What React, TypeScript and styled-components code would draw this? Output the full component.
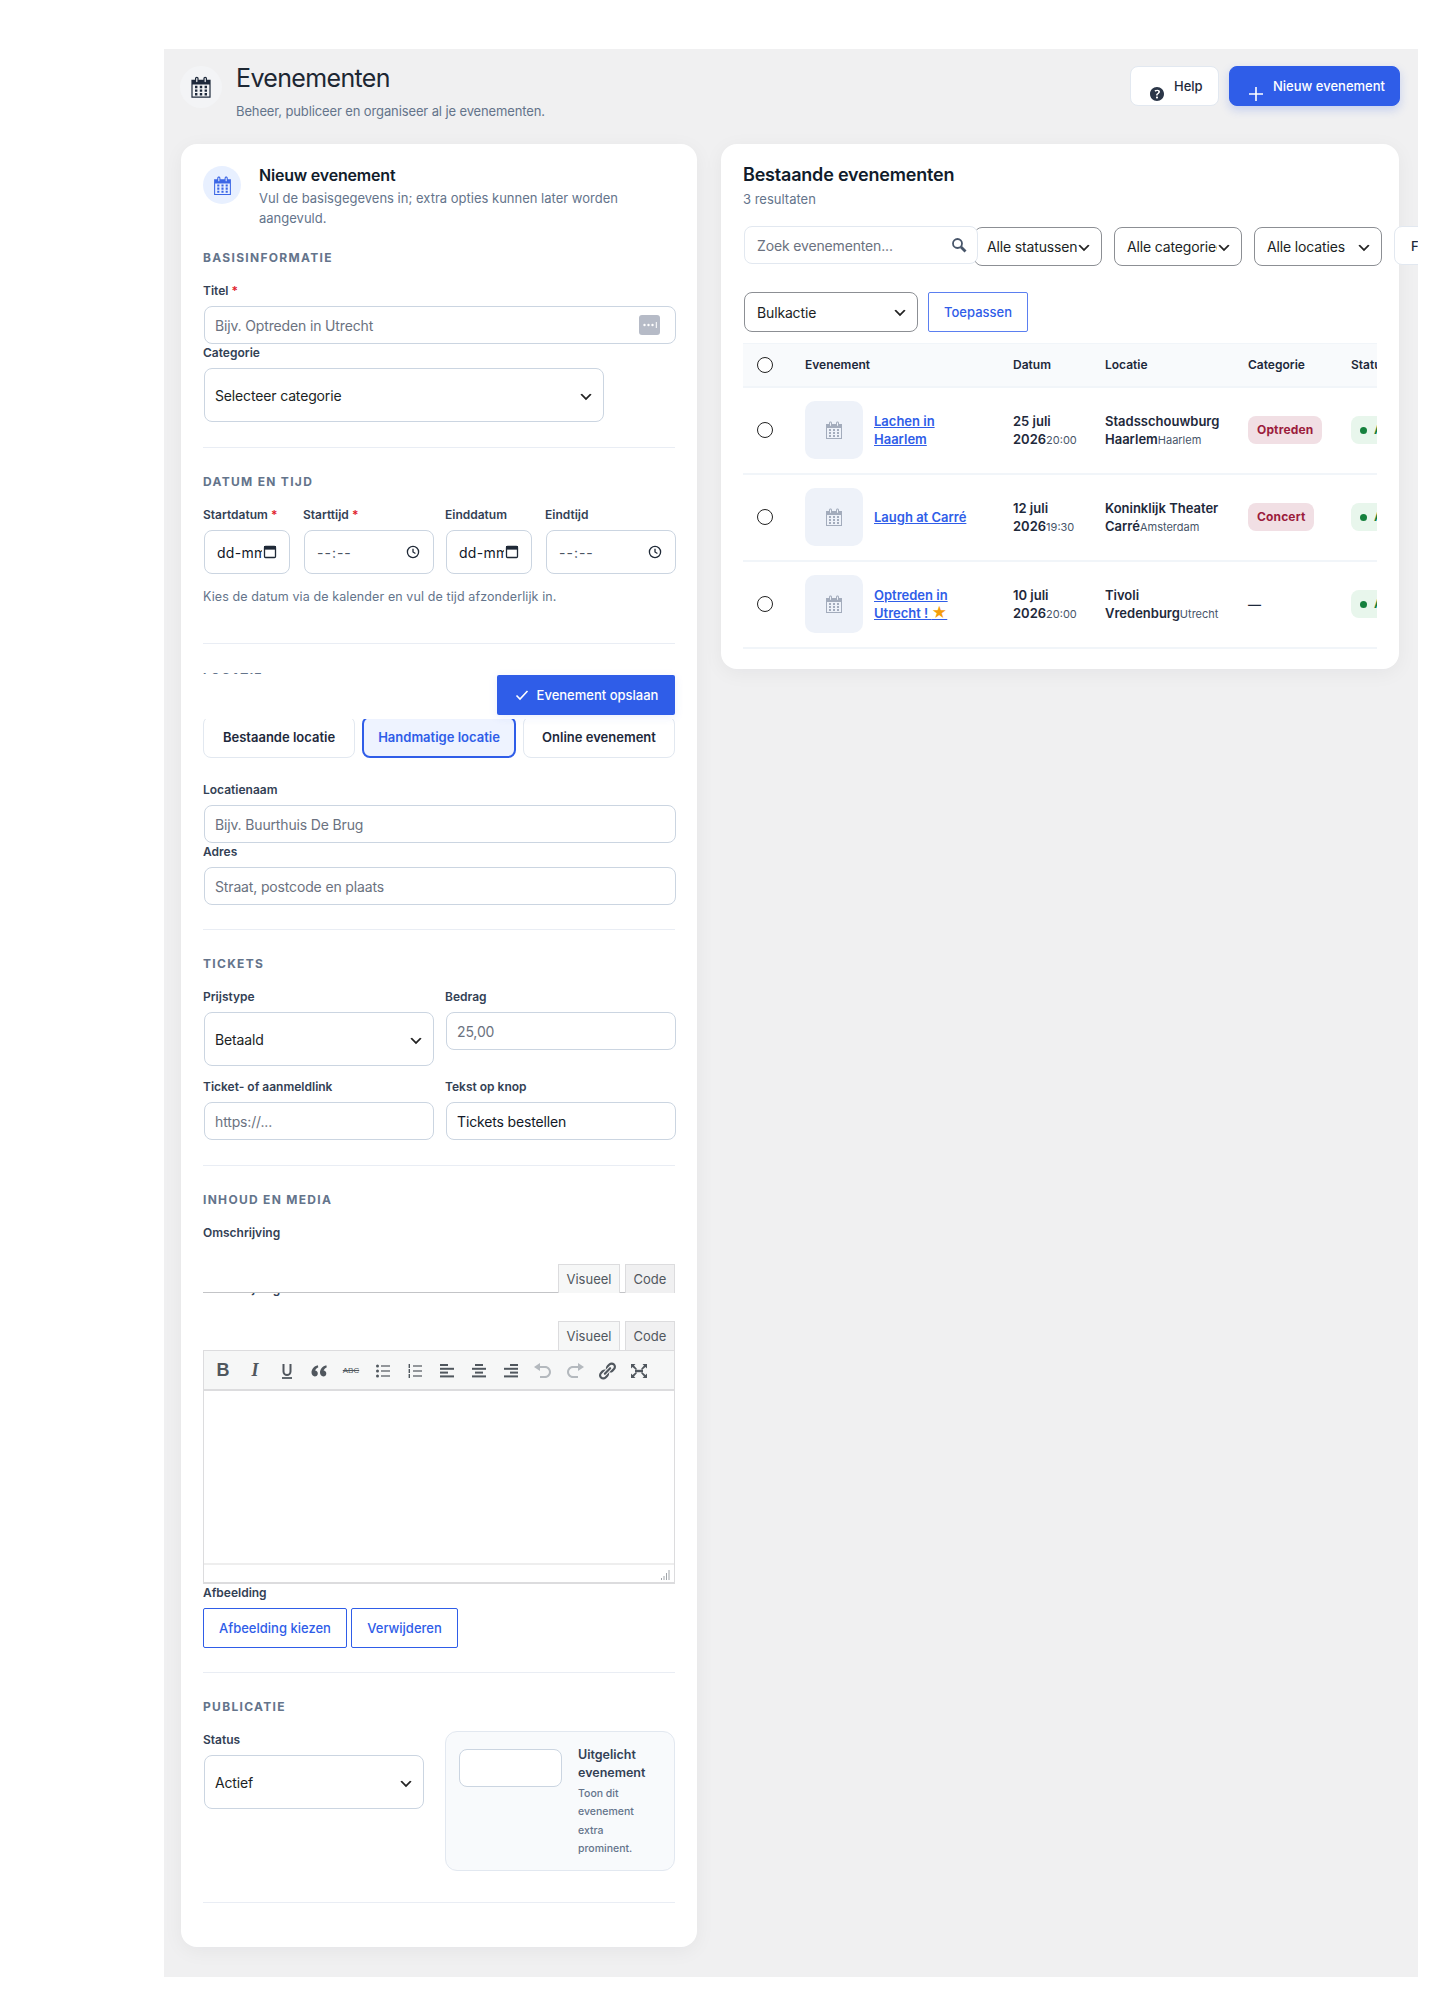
import React from "react";
import styled, { createGlobalStyle } from "styled-components";

const blue = "#2f5de8";
const slate = "#64748b";
const ink = "#1e293b";
const line = "#cbd5e1";

const GlobalStyle = createGlobalStyle`
  html, body { margin: 0; padding: 0; background: #fff; }
  body { font-family: Inter, "Liberation Sans", sans-serif; color: ${ink}; }
  * { box-sizing: border-box; }
`;

const Page = styled.div`
  padding: 49px 22px 37px 164px;
`;
const Main = styled.main`
  height: 1928px;
  background: #f0f0f1;
  padding: 17px 19px 30px 17px;
  overflow: hidden;
`;
const Header = styled.header`
  display: flex;
  justify-content: space-between;
  align-items: flex-start;
  height: 78px;
  margin: 0 -1px;
`;
const HeaderLeft = styled.div`
  display: flex;
  gap: 14px;
`;
const RoundIcon = styled.div<{ $size: number; $bg: string; $color: string }>`
  flex: none;
  width: ${(p) => p.$size}px;
  height: ${(p) => p.$size}px;
  border-radius: 50%;
  background: ${(p) => p.$bg};
  color: ${(p) => p.$color};
  display: flex;
  align-items: center;
  justify-content: center;
`;
const PageTitle = styled.h1`
  margin: 0;
  font-size: 25px;
  line-height: 24px;
  font-weight: 400;
  letter-spacing: -0.65px;
  color: #1d2733;
`;
const PageSub = styled.p`
  margin: 12px 0 0;
  font-size: 13px;
  line-height: 18px;
  letter-spacing: -0.12px;
  color: ${slate};
`;
const HeaderActions = styled.div`
  display: flex;
  gap: 10px;
`;
const HeaderButton = styled.button<{ $primary?: boolean; $w: number }>`
  width: ${(p) => p.$w}px;
  height: 40px;
  padding: 0 0 0 16px;
  display: flex;
  align-items: center;
  gap: 7px;
  border-radius: 8px;
  font: 500 13px Inter, sans-serif;
  border: 1px solid ${(p) => (p.$primary ? blue : "#e2e8f0")};
  background: ${(p) => (p.$primary ? blue : "#fff")};
  color: ${(p) => (p.$primary ? "#fff" : ink)};
  box-shadow: ${(p) => (p.$primary ? "0 4px 10px rgba(47,93,232,.22)" : "none")};
  svg { margin-top: 16px; }
`;
const Columns = styled.div`
  display: grid;
  grid-template-columns: 516px 678px;
  gap: 24px;
  align-items: start;
`;
const Card = styled.section`
  background: #fff;
  border-radius: 16px;
  box-shadow: 0 4px 20px rgba(15, 23, 42, 0.05);
`;
const FormCard = styled(Card)`
  height: 1803px;
  padding: 22px 22px 0;
`;
const ListCard = styled(Card)`
  height: 525px;
  padding: 21px 22px 0;
`;
const CardHead = styled.div`
  display: flex;
  gap: 18px;
`;
const CardTitle = styled.h2<{ $large?: boolean }>`
  margin: 0;
  font-size: ${(p) => (p.$large ? 18 : 16)}px;
  line-height: ${(p) => (p.$large ? 20 : 18)}px;
  font-weight: 600;
  letter-spacing: -0.2px;
  color: #111c2b;
`;
const CardSub = styled.p`
  margin: 5px 0 0;
  font-size: 13px;
  line-height: 19.5px;
  color: ${slate};
`;
const Section = styled.div<{ $pad?: number }>`
  position: relative;
  padding: 25px 0 ${(p) => p.$pad ?? 24}px;
  border-bottom: 1px solid #e9edf4;
`;
const FirstSection = styled(Section)`
  padding-top: 21px;
`;
const SectionTitle = styled.h3`
  margin: 0 0 17px;
  padding-top: 1px;
  font-size: 12px;
  line-height: 16px;
  font-weight: 700;
  letter-spacing: 1.3px;
  color: ${slate};
`;
const Label = styled.label`
  display: block;
  margin-bottom: 7px;
  font-size: 12px;
  line-height: 16px;
  font-weight: 600;
  color: #334155;
  em { font-style: normal; color: #e11d2e; }
`;
const Field = styled.div`
  & + & { margin-top: 1px; }
`;
const InputShell = styled.div<{ $wide?: boolean }>`
  position: relative;
  margin: 0 ${(p) => (p.$wide ? -1 : 1)}px 0 1px;
`;
const TextInput = styled.input`
  display: block;
  width: 100%;
  height: 38px;
  padding: 0 10px;
  border: 1px solid ${line};
  border-radius: 8px;
  background: #fff;
  font: 400 14px Inter, sans-serif;
  letter-spacing: -0.15px;
  color: #111827;
  outline: none;
  &::placeholder { color: #6b7280; opacity: 1; }
`;
const ManagerIcon = styled.svg`
  position: absolute;
  right: 16px;
  top: 9px;
`;
const Select = styled.select<{ $w: number; $short?: boolean }>`
  display: block;
  flex: none;
  width: ${(p) => p.$w}px;
  height: ${(p) => (p.$short ? 40 : 54)}px;
  margin: ${(p) => (p.$short ? 0 : "0 1px")};
  padding: 0 24px 0 ${(p) => (p.$short ? 12 : 10)}px;
  border: 1px solid ${(p) => (p.$short ? "#8c8f94" : line)};
  border-radius: 8px;
  appearance: none;
  background: #fff url("data:image/svg+xml,%3Csvg xmlns='http://www.w3.org/2000/svg' width='20' height='20'%3E%3Cpath d='M5 6l5 5 5-5 2 1-7 7-7-7 2-1z' fill='%23222'/%3E%3C/svg%3E") no-repeat right 9px top 55%;
  background-size: 16px 16px;
  font: 400 14px Inter, sans-serif;
  letter-spacing: -0.15px;
  color: #1b1f24;
`;
const DateGrid = styled.div`
  display: grid;
  grid-template-columns: 232px 232px;
  gap: 10px;
`;
const DatePair = styled.div`
  display: grid;
  grid-template-columns: 88px 132px;
  gap: 12px;
`;
const NativeField = styled.div`
  margin: 0 1px;
  height: 44px;
  padding: 0 12px;
  display: flex;
  align-items: center;
  justify-content: space-between;
  border: 1px solid ${line};
  border-radius: 8px;
  font-size: 14px;
  color: #111827;
  svg { flex: none; }
`;
const ClippedValue = styled.span`
  width: 45px;
  overflow: hidden;
  white-space: nowrap;
  letter-spacing: 0.3px;
`;
const TimeField = styled(NativeField)`
  padding-right: 13px;
  color: #4b5563;
  letter-spacing: 1px;
`;
const Help = styled.p`
  margin: 13px 0 0;
  font-size: 12.5px;
  line-height: 20px;
  letter-spacing: 0.1px;
  color: ${slate};
`;
const ActionBar = styled.div`
  position: absolute;
  z-index: 2;
  top: 30px;
  left: 0;
  right: 0;
  height: 45px;
  padding-top: 1px;
  display: flex;
  justify-content: flex-end;
  background: #fff;
`;
const SaveButton = styled.button`
  width: 178px;
  height: 40px;
  display: flex;
  align-items: center;
  justify-content: center;
  gap: 7px;
  border: 0;
  border-radius: 2px;
  background: ${blue};
  color: #fff;
  font: 500 13px Inter, sans-serif;
  box-shadow: 0 2px 10px rgba(47, 93, 232, 0.1);
`;
const ChoiceRow = styled.div`
  display: flex;
  gap: 7px;
  margin: 30px 0 24px;
`;
const Choice = styled.button<{ $active?: boolean }>`
  flex: 1;
  height: 42px;
  padding: 0;
  border-radius: 8px;
  font: 600 13px Inter, sans-serif;
  border: ${(p) => (p.$active ? `2px solid ${blue}` : "1px solid #e2e8f0")};
  background: ${(p) => (p.$active ? "#eef3ff" : "#fff")};
  color: ${(p) => (p.$active ? blue : ink)};
`;
const TwoCols = styled.div`
  display: grid;
  grid-template-columns: 232px 232px;
  gap: 13px 10px;
`;
const TabRow = styled.div<{ $ruled?: boolean; $top: number }>`
  display: flex;
  justify-content: flex-end;
  gap: 5px;
  height: 29px;
  margin-top: ${(p) => p.$top}px;
  border-bottom: ${(p) => (p.$ruled ? "1px solid #c3c4c7" : "0")};
`;
const Tab = styled.div<{ $active?: boolean }>`
  height: 29px;
  display: flex;
  align-items: center;
  justify-content: center;
  width: ${(p) => (p.$active ? 62 : 50)}px;
  border: 1px solid #dcdcde;
  border-bottom: 0;
  background: ${(p) => (p.$active ? "#f6f7f7" : "#f0f0f1")};
  font-size: 13px;
  color: #50575e;
`;
const ClippedLabel = styled.div`
  height: 4px;
  overflow: hidden;
  font-size: 12px;
  line-height: 16px;
  font-weight: 600;
  color: #334155;
  span { display: block; margin-top: -12px; }
`;
const Editor = styled.div`
  border: 1px solid #dcdcde;
  border-top: 0;
  margin-bottom: 1px;
`;
const Toolbar = styled.div`
  height: 41px;
  padding: 1px 3px 0;
  display: flex;
  align-items: center;
  background: #f6f7f7;
  border-top: 1px solid #dcdcde;
  border-bottom: 2px solid #dcdcde;
  color: #50575e;
`;
const ToolButton = styled.div<{ $off?: boolean }>`
  width: 32px;
  height: 30px;
  display: flex;
  align-items: center;
  justify-content: center;
  color: ${(p) => (p.$off ? "#b4b9be" : "#50575e")};
`;
const ToolLetter = styled(ToolButton)<{ $serif?: boolean }>`
  font-family: ${(p) => (p.$serif ? '"Liberation Serif", serif' : '"Liberation Sans", sans-serif')};
  font-size: 18px;
  font-weight: 700;
`;
const ToolStrike = styled(ToolButton)`
  font: 400 8px "Liberation Sans", sans-serif;
  text-decoration: line-through;
`;
const EditArea = styled.div`
  height: 172px;
`;
const StatusBar = styled.div`
  height: 20px;
  padding: 3px 3px 0 0;
  display: flex;
  justify-content: flex-end;
  border-top: 2px solid #eeeeee;
  border-bottom: 1px solid #dcdcde;
`;
const MediaRow = styled.div`
  display: flex;
  gap: 4px;
`;
const OutlineButton = styled.button<{ $w: number }>`
  width: ${(p) => p.$w}px;
  height: 40px;
  padding: 0;
  border: 1px solid ${blue};
  border-radius: 2px;
  background: #fff;
  color: ${blue};
  font: 500 13px Inter, sans-serif;
`;
const PublishGrid = styled.div`
  display: grid;
  grid-template-columns: 232px 230px;
  gap: 10px;
  margin-top: -1px;
`;
const StatusCol = styled.div`
  padding-top: 1px;
`;
const Feature = styled.div`
  height: 140px;
  padding: 14px 13px;
  display: flex;
  gap: 16px;
  background: #f8fafc;
  border: 1px solid #e2e8f0;
  border-radius: 12px;
`;
const FeatureBox = styled.div`
  flex: none;
  width: 103px;
  height: 38px;
  margin-top: 3px;
  background: #fff;
  border: 1px solid ${line};
  border-radius: 8px;
`;
const FeatureTitle = styled.div`
  font-size: 12.5px;
  line-height: 18px;
  font-weight: 600;
  color: #334155;
`;
const FeatureText = styled.div`
  margin-top: 3px;
  max-width: 70px;
  font-size: 10.5px;
  line-height: 18.3px;
  font-weight: 500;
  color: ${slate};
`;
const ListSub = styled.div`
  margin-top: 5px;
  font-size: 13px;
  line-height: 19px;
  color: ${slate};
`;
const FilterRow = styled.div`
  display: flex;
  align-items: flex-start;
  gap: 12px;
  width: 720px;
  margin-top: 17px;
  margin-left: 1px;
`;
const Search = styled.div`
  position: relative;
  flex: none;
  width: 234px;
  height: 38px;
  margin-right: -16px;
  z-index: 1;
  input { height: 38px; padding-left: 12px; border-color: #e2e8f0; }
  svg { position: absolute; right: 11px; top: 11px; color: #475569; }
`;
const FilterSelect = styled(Select)`
  height: 39px;
  margin-top: 1px;
`;
const FilterButton = styled.button`
  flex: none;
  width: 90px;
  height: 39px;
  padding: 0 0 0 16px;
  text-align: left;
  background: #fff;
  border: 1px solid #e2e8f0;
  border-radius: 8px;
  font: 500 13px Inter, sans-serif;
  color: ${ink};
`;
const BulkRow = styled.div`
  display: flex;
  gap: 10px;
  margin-top: 26px;
  margin-left: 1px;
`;
const ApplyButton = styled(OutlineButton)`
  border: 1px solid #5b7ff0;
`;
const TableClip = styled.div`
  width: 634px;
  margin-top: 11px;
  overflow: hidden;
`;
const Table = styled.table`
  width: 740px;
  table-layout: fixed;
  border-collapse: collapse;
`;
const Head = styled.tr`
  height: 43px;
  background: #f8fafc;
  border-top: 1px solid #f1f5f9;
  border-bottom: 2px solid #f1f5f9;
`;
const HeadCell = styled.th<{ $w: number }>`
  width: ${(p) => p.$w}px;
  padding: 0 0 0 12px;
  text-align: left;
  font-size: 12px;
  font-weight: 600;
  color: ${ink};
`;
const Row = styled.tr`
  height: 87px;
  border-bottom: 2px solid #f1f5f9;
`;
const Cell = styled.td`
  padding: 0 0 0 12px;
  vertical-align: middle;
  font-size: 13px;
  line-height: 18px;
  font-weight: 600;
  color: ${ink};
`;
const Radio = styled.input`
  appearance: none;
  display: block;
  width: 16px;
  height: 16px;
  margin: 0 0 0 2px;
  border: 1px solid #222;
  border-radius: 50%;
  background: #fff;
`;
const EventCell = styled.div`
  display: flex;
  align-items: center;
  gap: 11px;
`;
const Thumb = styled.div`
  flex: none;
  width: 58px;
  height: 58px;
  display: flex;
  align-items: center;
  justify-content: center;
  background: #eef2f9;
  border-radius: 10px;
  color: #a3acbc;
`;
const EventLink = styled.a`
  max-width: 100px;
  font-size: 13px;
  line-height: 18px;
  font-weight: 600;
  color: ${blue};
  text-decoration: underline;
  span { color: #f59e0b; font-size: 15px; line-height: 15px; }
`;
const Small = styled.small`
  font-size: 11px;
  font-weight: 400;
  color: #475569;
`;
const Badge = styled.span`
  display: inline-flex;
  align-items: center;
  height: 28px;
  padding: 0 9px;
  border-radius: 8px;
  background: #f1dfe4;
  color: #9b1c3c;
  font-size: 12px;
  font-weight: 700;
  letter-spacing: 0.15px;
`;
const StatusBadge = styled.span`
  display: inline-flex;
  align-items: center;
  gap: 7px;
  height: 28px;
  padding: 0 9px;
  border-radius: 8px;
  background: #e8f6ec;
  color: #15803d;
  font-size: 12px;
  font-weight: 700;
  &::before {
    content: "";
    width: 7px;
    height: 7px;
    border-radius: 50%;
    background: #15803d;
  }
`;

const CALENDAR =
  "M15 4h3v15H2V4h3V3c0-.41.15-.76.44-1.06.29-.29.65-.44 1.06-.44s.77.15 1.06.44c.29.3.44.65.44 1.06v1h4V3c0-.41.15-.76.44-1.06.29-.29.65-.44 1.06-.44s.77.15 1.06.44c.29.3.44.65.44 1.06v1zM6 3v2.5c0 .14.05.26.15.36.09.09.21.14.35.14s.26-.05.35-.14c.1-.1.15-.22.15-.36V3c0-.14-.05-.26-.15-.35-.09-.1-.21-.15-.35-.15s-.26.05-.35.15c-.1.09-.15.21-.15.35zm7 0v2.5c0 .14.05.26.14.36.1.09.22.14.36.14s.26-.05.36-.14c.09-.1.14-.22.14-.36V3c0-.14-.05-.26-.14-.35-.1-.1-.22-.15-.36-.15s-.26.05-.36.15c-.09.09-.14.21-.14.35zm4 15V8H3v10h14zM7 9v2H5V9h2zm2 0h2v2H9V9zm4 2V9h2v2h-2zm-6 1v2H5v-2h2zm2 0h2v2H9v-2zm4 2v-2h2v2h-2zm-6 1v2H5v-2h2zm4 2H9v-2h2v2zm4 0h-2v-2h2v2z";

function CalendarIcon({ size }: { size: number }) {
  return (
    <svg width={size} height={size} viewBox="0 0 20 20" fill="currentColor">
      <path d={CALENDAR} />
    </svg>
  );
}

function PickerCalendar() {
  return (
    <svg width="14" height="14" viewBox="0 0 14 14" fill="none" stroke="#1f2937">
      <rect x="1.5" y="1.5" width="11" height="11" rx="1" strokeWidth="1.3" />
      <rect x="1.5" y="1.5" width="11" height="2.6" fill="#1f2937" />
    </svg>
  );
}

function PickerClock() {
  return (
    <svg width="14" height="14" viewBox="0 0 14 14" fill="none" stroke="#1f2937" strokeWidth="1.3">
      <circle cx="7" cy="7" r="5.6" />
      <path d="M7 3.8V7l2.4 1.5" />
    </svg>
  );
}

function Manager() {
  return (
    <ManagerIcon width="21" height="20" viewBox="0 0 21 20">
      <rect width="21" height="20" rx="3" fill="#b6bbc7" />
      <circle cx="5.5" cy="10" r="1.2" fill="#fff" />
      <circle cx="9.5" cy="10" r="1.2" fill="#fff" />
      <circle cx="13.5" cy="10" r="1.2" fill="#fff" />
      <rect x="16.8" y="7" width="1" height="6" fill="#fff" />
    </ManagerIcon>
  );
}

function Bars({ rows }: { rows: [number, number][] }) {
  return (
    <svg width="20" height="20" viewBox="0 0 20 20" fill="currentColor">
      {rows.map(([x, w], i) => (
        <rect key={i} x={x} y={3 + i * 3.8} width={w} height="2" />
      ))}
    </svg>
  );
}

function BulletList() {
  return (
    <svg width="20" height="20" viewBox="0 0 20 20" fill="currentColor">
      {[5, 10, 15].map((y) => (
        <g key={y}>
          <circle cx="4.5" cy={y} r="1.5" />
          <rect x="8" y={y - 0.6} width="9" height="1.2" />
        </g>
      ))}
    </svg>
  );
}

function NumberList() {
  return (
    <svg width="20" height="20" viewBox="0 0 20 20" fill="currentColor">
      {[5, 10, 15].map((y) => (
        <g key={y}>
          <rect x="3.6" y={y - 2} width="1.4" height="4" />
          <rect x="8" y={y - 0.6} width="9" height="1.2" />
        </g>
      ))}
    </svg>
  );
}

function Toolbox() {
  return (
    <Toolbar>
      <ToolLetter>B</ToolLetter>
      <ToolLetter $serif>
        <i>I</i>
      </ToolLetter>
      <ToolLetter>
        <svg width="20" height="20" viewBox="0 0 20 20" fill="none" stroke="currentColor" strokeWidth="2">
          <path d="M6.5 3v7.5a3.5 3.5 0 0 0 7 0V3" />
          <path d="M5 17h10" strokeWidth="1.8" />
        </svg>
      </ToolLetter>
      <ToolButton>
        <svg width="20" height="20" viewBox="0 0 20 20" fill="currentColor">
          <path d="M8.8 4.2C5 5.3 2.5 8 2.5 11.6c0 2.3 1.5 3.9 3.3 3.9 1.7 0 3-1.3 3-3 0-1.6-1.1-2.8-2.7-2.9.4-1.4 1.5-2.6 3.2-3.4zM17.3 4.2c-3.8 1.1-6.3 3.8-6.3 7.4 0 2.3 1.5 3.9 3.3 3.9 1.7 0 3-1.3 3-3 0-1.6-1.1-2.8-2.7-2.9.4-1.4 1.5-2.6 3.2-3.4z" />
        </svg>
      </ToolButton>
      <ToolStrike>ABC</ToolStrike>
      <ToolButton>
        <BulletList />
      </ToolButton>
      <ToolButton>
        <NumberList />
      </ToolButton>
      <ToolButton>
        <Bars rows={[[3, 8], [3, 14], [3, 8], [3, 14]]} />
      </ToolButton>
      <ToolButton>
        <Bars rows={[[6, 8], [3, 14], [6, 8], [3, 14]]} />
      </ToolButton>
      <ToolButton>
        <Bars rows={[[9, 8], [3, 14], [9, 8], [3, 14]]} />
      </ToolButton>
      <ToolButton $off>
        <svg width="20" height="20" viewBox="0 0 20 20" fill="currentColor">
          <path d="M12 5H7V2L1 6l6 4V7h5c2.2 0 4 1.8 4 4s-1.8 4-4 4H7v2h5c3.3 0 6-2.7 6-6s-2.7-6-6-6z" />
        </svg>
      </ToolButton>
      <ToolButton $off>
        <svg width="20" height="20" viewBox="0 0 20 20" fill="currentColor">
          <path d="M8 5h5V2l6 4-6 4V7H8C5.8 7 4 8.8 4 11s1.8 4 4 4h5v2H8c-3.3 0-6-2.7-6-6s2.7-6 6-6z" />
        </svg>
      </ToolButton>
      <ToolButton>
        <svg width="20" height="20" viewBox="0 0 20 20" fill="currentColor">
          <path d="M17.74 2.76c1.68 1.69 1.68 4.41 0 6.1l-1.53 1.52c-1.12 1.12-2.7 1.47-4.14 1.09l2.62-2.61.76-.77.76-.76c.84-.84.84-2.2 0-3.04-.84-.85-2.2-.85-3.04 0l-.77.76-3.38 3.38c-.37-1.44-.02-3.02 1.1-4.14l1.52-1.53c1.69-1.68 4.42-1.68 6.1 0zM8.59 13.43l5.34-5.34c.42-.42.42-1.1 0-1.52-.44-.43-1.13-.39-1.53 0l-5.33 5.34c-.42.42-.42 1.1 0 1.52.44.43 1.13.39 1.52 0zm-.76 2.29l4.14-4.15c.38 1.44.03 3.02-1.09 4.14l-1.52 1.53c-1.69 1.68-4.41 1.68-6.1 0-1.68-1.68-1.68-4.42 0-6.1l1.53-1.52c1.12-1.12 2.7-1.47 4.14-1.1l-4.14 4.15c-.85.84-.85 2.2 0 3.05.84.84 2.2.84 3.04 0z" />
        </svg>
      </ToolButton>
      <ToolButton>
        <svg width="20" height="20" viewBox="0 0 20 20" fill="currentColor">
          <path d="M2 3h4.500L5 4.500 8 8l-1 1-3.500-3L2 7.500zM18 3v4.500L16.500 6 13 9l-1-1 3-3.500L13.500 3zM2 17v-4.500L3.500 14 7 11l1 1-3 3.500L6.500 17zM18 17h-4.500L15 15.500 12 12l1-1 3.500 3 1.500-1.500z" />
          <rect x="6" y="8.800" width="8" height="2.400" />
        </svg>
      </ToolButton>
    </Toolbar>
  );
}

const rows = [
  { title: "Lachen in Haarlem", date: "25 juli 2026", time: "20:00", place: "Stadsschouwburg Haarlem", city: "Haarlem", category: "Optreden" },
  { title: "Laugh at Carré", date: "12 juli 2026", time: "19:30", place: "Koninklijk Theater Carré", city: "Amsterdam", category: "Concert" },
  { title: "Optreden in Utrecht ! ", star: true, date: "10 juli 2026", time: "20:00", place: "Tivoli Vredenburg", city: "Utrecht" },
];

export default function App() {
  return (
    <Page>
      <GlobalStyle />
      <Main>
        <Header>
          <HeaderLeft>
            <RoundIcon $size={42} $bg="#f3f4f6" $color="#1e293b">
              <CalendarIcon size={24} />
            </RoundIcon>
            <div>
              <PageTitle>Evenementen</PageTitle>
              <PageSub>Beheer, publiceer en organiseer al je evenementen.</PageSub>
            </div>
          </HeaderLeft>
          <HeaderActions>
            <HeaderButton $w={89}>
              <svg width="20" height="20" viewBox="0 0 20 20" fill="#2b3648">
                <path d="M17 10c0-3.870-3.140-7-7-7-3.870 0-7 3.130-7 7 0 3.860 3.130 7 7 7 3.860 0 7-3.140 7-7zm-6.300 1.480H9.140v-.43c0-.38.080-.7.240-.98s.46-.57.880-.89c.41-.29.680-.53.810-.71.140-.18.200-.39.200-.62 0-.25-.090-.44-.280-.58-.190-.13-.450-.19-.790-.19-.580 0-1.250.190-2 .57l-.640-1.280c.870-.49 1.800-.74 2.770-.74.810 0 1.450.200 1.920.580.480.39.710.91.710 1.550 0 .43-.090.8-.290 1.110-.190.320-.570.670-1.110 1.060-.380.280-.610.490-.710.630-.1.150-.150.340-.150.570v.35zm-1.470 2.740c-.180-.17-.270-.42-.270-.73 0-.33.080-.58.260-.75s.43-.25.770-.25c.320 0 .570.090.750.260s.270.42.270.74c0 .3-.090.55-.270.72-.180.18-.430.270-.750.270-.330 0-.580-.090-.760-.26z" />
              </svg>
              Help
            </HeaderButton>
            <HeaderButton $primary $w={171}>
              <svg width="20" height="20" viewBox="0 0 20 20" fill="none" stroke="#fff" strokeWidth="1.600">
                <path d="M10 3v14M3 10h14" />
              </svg>
              Nieuw evenement
            </HeaderButton>
          </HeaderActions>
        </Header>

        <Columns>
          <FormCard>
            <CardHead>
              <RoundIcon $size={38} $bg="#e8f0ff" $color="#3b66e6">
                <CalendarIcon size={21} />
              </RoundIcon>
              <div>
                <CardTitle>Nieuw evenement</CardTitle>
                <CardSub>Vul de basisgegevens in; extra opties kunnen later worden aangevuld.</CardSub>
              </div>
            </CardHead>

            <FirstSection $pad={25}>
              <SectionTitle>BASISINFORMATIE</SectionTitle>
              <Field>
                <Label>
                  Titel <em>*</em>
                </Label>
                <InputShell $wide>
                  <TextInput placeholder="Bijv. Optreden in Utrecht" />
                  <Manager />
                </InputShell>
              </Field>
              <Field>
                <Label>Categorie</Label>
                <Select $w={400} defaultValue="">
                  <option value="">Selecteer categorie</option>
                </Select>
              </Field>
            </FirstSection>

            <Section $pad={36}>
              <SectionTitle>DATUM EN TIJD</SectionTitle>
              <DateGrid>
                <DatePair>
                  <div>
                    <Label>
                      Startdatum <em>*</em>
                    </Label>
                    <NativeField>
                      <ClippedValue>dd-mm-jjjj</ClippedValue>
                      <PickerCalendar />
                    </NativeField>
                  </div>
                  <div>
                    <Label>
                      Starttijd <em>*</em>
                    </Label>
                    <TimeField>
                      --:--
                      <PickerClock />
                    </TimeField>
                  </div>
                </DatePair>
                <DatePair>
                  <div>
                    <Label>Einddatum</Label>
                    <NativeField>
                      <ClippedValue>dd-mm-jjjj</ClippedValue>
                      <PickerCalendar />
                    </NativeField>
                  </div>
                  <div>
                    <Label>Eindtijd</Label>
                    <TimeField>
                      --:--
                      <PickerClock />
                    </TimeField>
                  </div>
                </DatePair>
              </DateGrid>
              <Help>Kies de datum via de kalender en vul de tijd afzonderlijk in.</Help>
            </Section>

            <Section>
              <SectionTitle>LOCATIE</SectionTitle>
              <ActionBar>
                <SaveButton>
                  <svg width="16" height="16" viewBox="0 0 16 16" fill="none" stroke="#fff" strokeWidth="1.600">
                    <path d="M2.500 8.500l3.500 3.500 7.500-8" />
                  </svg>
                  Evenement opslaan
                </SaveButton>
              </ActionBar>
              <ChoiceRow>
                <Choice>Bestaande locatie</Choice>
                <Choice $active>Handmatige locatie</Choice>
                <Choice>Online evenement</Choice>
              </ChoiceRow>
              <Field>
                <Label>Locatienaam</Label>
                <InputShell $wide>
                  <TextInput placeholder="Bijv. Buurthuis De Brug" />
                </InputShell>
              </Field>
              <Field>
                <Label>Adres</Label>
                <InputShell $wide>
                  <TextInput placeholder="Straat, postcode en plaats" />
                </InputShell>
              </Field>
            </Section>

            <Section $pad={25}>
              <SectionTitle>TICKETS</SectionTitle>
              <TwoCols>
                <div>
                  <Label>Prijstype</Label>
                  <Select $w={230} defaultValue="b">
                    <option value="b">Betaald</option>
                  </Select>
                </div>
                <div>
                  <Label>Bedrag</Label>
                  <InputShell>
                    <TextInput placeholder="25,00" />
                  </InputShell>
                </div>
                <div>
                  <Label>Ticket- of aanmeldlink</Label>
                  <InputShell>
                    <TextInput placeholder="https://..." />
                  </InputShell>
                </div>
                <div>
                  <Label>Tekst op knop</Label>
                  <InputShell>
                    <TextInput defaultValue="Tickets bestellen" />
                  </InputShell>
                </div>
              </TwoCols>
            </Section>

            <Section>
              <SectionTitle>INHOUD EN MEDIA</SectionTitle>
              <Label>Omschrijving</Label>
              <TabRow $ruled $top={23}>
                <Tab $active>Visueel</Tab>
                <Tab>Code</Tab>
              </TabRow>
              <ClippedLabel>
                <span>Omschrijving</span>
              </ClippedLabel>
              <TabRow $top={24}>
                <Tab $active>Visueel</Tab>
                <Tab>Code</Tab>
              </TabRow>
              <Editor>
                <Toolbox />
                <EditArea />
                <StatusBar>
                  <svg width="12" height="12" viewBox="0 0 12 12" stroke="#a0a5aa" strokeWidth="1">
                    <path d="M2.500 12V10M5 12V8M7.500 12V5M10 12V2" />
                  </svg>
                </StatusBar>
              </Editor>
              <Label>Afbeelding</Label>
              <MediaRow>
                <OutlineButton $w={144}>Afbeelding kiezen</OutlineButton>
                <OutlineButton $w={107}>Verwijderen</OutlineButton>
              </MediaRow>
            </Section>

            <Section $pad={31}>
              <SectionTitle>PUBLICATIE</SectionTitle>
              <PublishGrid>
                <StatusCol>
                  <Label>Status</Label>
                  <Select $w={220} defaultValue="a">
                    <option value="a">Actief</option>
                  </Select>
                </StatusCol>
                <Feature>
                  <FeatureBox />
                  <div>
                    <FeatureTitle>Uitgelicht evenement</FeatureTitle>
                    <FeatureText>Toon dit evenement extra prominent.</FeatureText>
                  </div>
                </Feature>
              </PublishGrid>
            </Section>
          </FormCard>

          <ListCard>
            <CardTitle $large>Bestaande evenementen</CardTitle>
            <ListSub>3 resultaten</ListSub>
            <FilterRow>
              <Search>
                <TextInput placeholder="Zoek evenementen..." />
                <svg width="16" height="16" viewBox="0 0 16 16" fill="none" stroke="currentColor">
                  <circle cx="6.500" cy="6.500" r="4.500" strokeWidth="1.800" />
                  <path d="M10 10l4.500 4.500" strokeWidth="2.800" />
                </svg>
              </Search>
              <FilterSelect $short $w={128} defaultValue="a">
                <option value="a">Alle statussen</option>
              </FilterSelect>
              <FilterSelect $short $w={128} defaultValue="a">
                <option value="a">Alle categorieën</option>
              </FilterSelect>
              <FilterSelect $short $w={128} defaultValue="a">
                <option value="a">Alle locaties</option>
              </FilterSelect>
              <FilterButton>Filteren</FilterButton>
            </FilterRow>
            <BulkRow>
              <Select $short $w={174} defaultValue="a">
                <option value="a">Bulkactie</option>
              </Select>
              <ApplyButton $w={100}>Toepassen</ApplyButton>
            </BulkRow>
            <TableClip>
              <Table>
                <thead>
                  <Head>
                    <HeadCell $w={50}>
                      <Radio type="checkbox" />
                    </HeadCell>
                    <HeadCell $w={208}>Evenement</HeadCell>
                    <HeadCell $w={92}>Datum</HeadCell>
                    <HeadCell $w={143}>Locatie</HeadCell>
                    <HeadCell $w={103}>Categorie</HeadCell>
                    <HeadCell $w={144}>Status</HeadCell>
                  </Head>
                </thead>
                <tbody>
                  {rows.map((r) => (
                    <Row key={r.title}>
                      <Cell>
                        <Radio type="checkbox" />
                      </Cell>
                      <Cell>
                        <EventCell>
                          <Thumb>
                            <CalendarIcon size={20} />
                          </Thumb>
                          <EventLink href="#">
                            {r.title}
                            {r.star && <span>★</span>}
                          </EventLink>
                        </EventCell>
                      </Cell>
                      <Cell>
                        {r.date}
                        <Small>{r.time}</Small>
                      </Cell>
                      <Cell>
                        {r.place}
                        <Small>{r.city}</Small>
                      </Cell>
                      <Cell>{r.category ? <Badge>{r.category}</Badge> : "—"}</Cell>
                      <Cell>
                        <StatusBadge>Actief</StatusBadge>
                      </Cell>
                    </Row>
                  ))}
                </tbody>
              </Table>
            </TableClip>
          </ListCard>
        </Columns>
      </Main>
    </Page>
  );
}
